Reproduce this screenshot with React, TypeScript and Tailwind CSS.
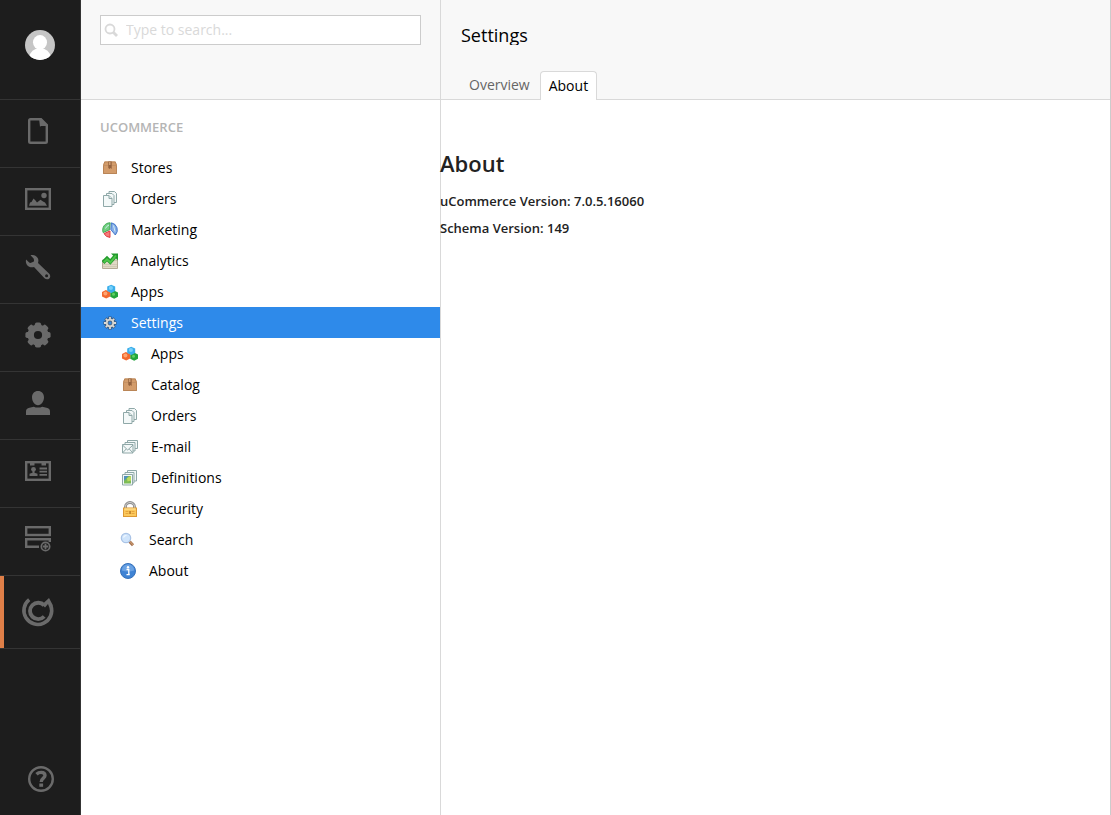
import React, { type ReactNode } from "react";

/* ---------- Section icons (dark rail) ---------- */

function RailIcon({ children }: { children: ReactNode }) {
  return (
    <svg aria-hidden="true" viewBox="0 0 28 28" className="size-7" fill="none">
      {children}
    </svg>
  );
}

const gearTeeth = [0, 45, 90, 135, 180, 225, 270, 315];

const ContentIcon = () => (
  <RailIcon>
    <path d="M16 2.200H6.500Q5.200 2.200 5.200 3.500V24.500Q5.200 25.800 6.500 25.800H21.500Q22.800 25.800 22.800 24.500V8.500" stroke="currentColor" strokeWidth="2.400" />
    <path d="M15 1h2.500L24 7.500V9h-7q-.5 0-1 1z" fill="currentColor" />
  </RailIcon>
);
const MediaIcon = () => (
  <RailIcon>
    <rect x="2.200" y="4.200" width="23.600" height="19.600" stroke="currentColor" strokeWidth="2.400" />
    <circle cx="20" cy="10.500" r="2.700" fill="currentColor" />
    <path d="M5 20.700 6 17.500 7.500 17 9.500 13.500 11.500 15.500 13 17.500 16.500 14.800 19 16.500 21 17.500 23 20.700z" fill="currentColor" />
  </RailIcon>
);
const WrenchIcon = () => (
  <RailIcon>
    <path
      fillRule="evenodd"
      fill="currentColor"
      d="M6.500 2.200C9.500 1.200 12.900 2.700 14 5.600 14.600 7.200 14.500 8.600 14 10L25 20.400C26.700 22 26.600 24.200 25.300 25.400 24 26.600 22 26.600 20.500 25.200L10 14C7.500 14.900 4.600 14 3 11.900 1.800 10.200 1.600 8.400 2.100 6.600L5.200 9.600Q6 10.200 7 9.800L9.500 8.700Q10.300 8 10 7L9.600 5.400zM22.600 21.200a1.500 1.500 0 1 0 0 3 1.500 1.500 0 0 0 0-3z"
    />
  </RailIcon>
);
const GearIcon = () => (
  <RailIcon>
    <circle cx="14" cy="14" r="7.300" stroke="currentColor" strokeWidth="6.400" />
    {gearTeeth.map((a) => (
      <rect key={a} x="10.900" y="1.400" width="6.200" height="5" rx="1.800" fill="currentColor" transform={`rotate(${a} 14 14)`} />
    ))}
  </RailIcon>
);
const UserIcon = () => (
  <RailIcon>
    <path
      fill="currentColor"
      d="M14 2c3.600 0 6 2.600 6 6.200 0 4-2.600 8-6 8s-6-4-6-8C8 4.600 10.400 2 14 2zM2 26v-3.500c0-2.200 1.200-3.200 3.500-3.800l4.300-1Q11.500 18.600 14 18.600t4.200-.9l4.300 1c2.300.6 3.500 1.600 3.500 3.800V26z"
    />
  </RailIcon>
);
const MembersIcon = () => (
  <RailIcon>
    <rect x="2.200" y="5.200" width="23.600" height="17.600" stroke="currentColor" strokeWidth="2.400" />
    <path d="M6 5h4.500v3.500H6zM17.500 5H22v3.500h-4.500z" fill="currentColor" />
    <path d="M15.500 11.500H23M15.500 14.700H23M15.500 17.900H23" stroke="currentColor" strokeWidth="1.800" />
    <circle cx="9.500" cy="12.300" r="2.400" fill="currentColor" />
    <path d="M8.500 13.500h2v2.300l3 1V19H5.500v-2.200l3-1z" fill="currentColor" />
  </RailIcon>
);
const FormsIcon = () => (
  <RailIcon>
    <rect x="2.200" y="2.200" width="23.600" height="7.800" stroke="currentColor" strokeWidth="2.400" />
    <path d="M15 21.800H2.200V14.200H25.800V17" stroke="currentColor" strokeWidth="2.400" />
    <circle cx="21.500" cy="21.500" r="4.200" stroke="currentColor" strokeWidth="1.700" />
    <path d="M21.500 18.800v5.400M18.800 21.500h5.400" stroke="currentColor" strokeWidth="1.800" />
  </RailIcon>
);
const CommerceIcon = () => (
  <svg aria-hidden="true" viewBox="0 0 34 34" className="size-[34px]" fill="none">
    <path d="M8.200 4.600A13.900 13.900 0 1 0 30 11.100" stroke="currentColor" strokeWidth="3.600" />
    <path d="M28 3 32 10.500 28.300 12.500 27 9 24 12.500 21 9.500z" fill="currentColor" />
    <path d="M23.200 10.300A8.200 8.200 0 1 0 23.200 21.500" stroke="currentColor" strokeWidth="3.900" />
  </svg>
);
const HelpIcon = () => (
  <RailIcon>
    <circle cx="14" cy="14" r="11.800" stroke="currentColor" strokeWidth="2.400" />
    <path d="M9.500 9.300Q11.500 7.400 14.200 7.400C16.900 7.400 18 8.900 18 10.600 18 13.200 14.200 13.200 14.200 17" stroke="currentColor" strokeWidth="3.400" />
    <rect x="12.300" y="18.500" width="3.800" height="3.300" fill="currentColor" />
  </RailIcon>
);

/* ---------- Tree icons ---------- */

function TreeIcon({ children }: { children: ReactNode }) {
  return (
    <svg aria-hidden="true" viewBox="0 0 16 16" className="size-4 shrink-0" fill="none">
      {children}
    </svg>
  );
}

const BoxIcon = () => (
  <TreeIcon>
    <path d="M2.500 1.500h11L15 5.500V14H1V5.500z" fill="#d39c6b" />
    <path d="M1.500 5.500v8h13v-8L13.300 2H2.700z" stroke="#b98557" />
    <path d="M1.500 5.500h13" stroke="#c08e62" strokeWidth=".8" />
    <path d="M6.300 1.500h3.400V9l-1.200-1-1 1-1.200-1z" fill="#94633f" />
    <path d="M7 2h1.500v3H7z" fill="#cf9f74" />
  </TreeIcon>
);
const OrdersIcon = () => (
  <TreeIcon>
    <g fill="#f3f8f8" stroke="#8fa8a8">
      <path d="M7 .5h5.500l2 2v9H7z" />
      <path d="M4.500 2.500h5.500l2 2v9H4.500z" />
      <path d="M1.500 4.500h5.500l3 3v8H1.500z" />
      <path d="M7 4.500v3h3" fill="#dde8e6" />
    </g>
  </TreeIcon>
);
const MarketingIcon = () => (
  <TreeIcon>
    <path d="M7.600 7.700 1.200 10.600A7.200 7.200 0 0 1 8.200.8z" fill="#72cf80" stroke="#38a44e" strokeWidth=".9" />
    <path d="M8.800 7.500 9.500.8A7.300 7.300 0 0 1 13.300 13z" fill="#85ade9" stroke="#3a70c4" strokeWidth=".9" />
    <path d="M8 8.900v6.500A7 7 0 0 1 2 11.600z" fill="#f57d7a" stroke="#dc2f35" strokeWidth=".9" />
    <path d="M3.500 6.500Q4.500 4 7 3M11.500 3.500l1.500 6" stroke="#d0edf0" />
  </TreeIcon>
);
const AnalyticsIcon = () => (
  <TreeIcon>
    <path d="M.5 7h15v8.500H.5z" fill="#e0d9c5" stroke="#b3aa94" />
    <path d="M1 11.500h14M1 13.500h14" stroke="#cdc5b0" strokeWidth=".8" />
    <path d="m1 9.500 4-4 3.300 3.300L13 3.500" stroke="#239b2d" strokeWidth="4" />
    <path d="M9 .5h7v7z" fill="#239b2d" />
    <path d="m1.800 9.300 3.200-3 3.400 3L14 2.500" stroke="#4fc64a" strokeWidth="1.900" />
  </TreeIcon>
);
const AppsIcon = () => (
  <TreeIcon>
    <path d="m12 6.500 4 2.100v4.200l-3.800 2-4-2V8.600z" fill="#22a53b" />
    <path d="M3.900 6 8.200 8v4.500L4.200 14.500 0 12.600V8z" fill="#f26a30" />
    <path d="M9.200.8 13.200 2.600v4.400L9.400 9 5.200 7.100V2.600z" fill="#3aaeea" />
    <circle cx="8.900" cy="4" r="2.100" fill="#79d0fa" />
    <circle cx="3.400" cy="9.500" r="2" fill="#ffa470" />
    <circle cx="11.500" cy="10.300" r="1.500" fill="#5fd063" />
  </TreeIcon>
);
const SettingsIcon = () => (
  <TreeIcon>
    <g stroke="#3c5879" strokeWidth="3.400">
      <path d="M8 1.500v13M1.500 8h13M3.500 3.500l9 9M12.500 3.500l-9 9" />
    </g>
    <g stroke="#dcdad5" strokeWidth="1.800">
      <path d="M8 2v12M2 8h12M3.800 3.800l8.400 8.400M12.200 3.800l-8.400 8.400" />
    </g>
    <circle cx="8" cy="8" r="3.300" fill="#4c6d91" stroke="#d8d6d1" strokeWidth="1.800" />
    <circle cx="8" cy="8" r="1.300" fill="#2e8aea" />
  </TreeIcon>
);
const MailIcon = () => (
  <TreeIcon>
    <g fill="#f3f8f8" stroke="#8fa8a8">
      <path d="M5.500 1.500h10v8h-10z" />
      <path d="M3 3.500h10v8.500H3z" />
      <path d="M.5 5.500h10.500v8.500H.5z" />
      <path d="m.5 6 5.200 5L11 6M.5 14l3.700-4M11 14l-3.700-4" />
    </g>
  </TreeIcon>
);
const DefinitionsIcon = () => (
  <TreeIcon>
    <g fill="#f3f8f8" stroke="#8fa8a8">
      <path d="M5.500.5h9v10.500h-9z" />
      <path d="M3 2.500h9V13H3z" />
      <path d="M.5 4.500h10V15H.5z" />
    </g>
    <path d="M2 6h7v7.500H2z" fill="#7cbb55" />
    <path d="M2 6h4.500L2 11z" fill="#4f90bd" />
    <path d="m5 8 4-2v4.500l-3.500 1z" fill="#bcdc60" />
  </TreeIcon>
);
const SecurityIcon = () => (
  <TreeIcon>
    <path d="M3.500 8V5.500a4.500 4 0 0 1 9 0V8" stroke="#8d8d8d" strokeWidth="2.800" />
    <path d="M3.500 7.500v-2a4.500 4 0 0 1 9 0v2" stroke="#cfcfcf" strokeWidth="1" />
    <rect x="1.500" y="7" width="13" height="8.500" fill="#fbc95c" stroke="#dc9833" />
    <path d="M2.500 8h11" stroke="#ffe9a4" />
    <path d="M3.500 10.500h3M3.500 12.500h3M9.500 10.500h3M9.500 12.500h3" stroke="#e7a43c" />
    <path d="M7.300 10h1.500v3H7.300z" fill="#b87a25" />
  </TreeIcon>
);
const SearchIcon = () => (
  <TreeIcon>
    <path d="m9.500 9.500 3.500 3.800" stroke="#a77350" strokeWidth="3" />
    <path d="m9.500 9 3.700 4" stroke="#d4a477" strokeWidth="1" />
    <circle cx="6" cy="6" r="4.700" fill="#cfe4fb" stroke="#a9c3e6" strokeWidth="1.200" />
    <path d="M3.500 5.500Q4 3.500 6.500 3.500" stroke="#f2f9ff" strokeWidth="1.200" />
  </TreeIcon>
);
const InfoIcon = () => (
  <TreeIcon>
    <circle cx="8" cy="8" r="7.500" fill="#3f83d4" stroke="#3772bb" />
    <path d="M1.800 7.500a6.200 6.200 0 0 1 12.400 0Q8 9.500 1.800 7.500z" fill="#6aa2e3" />
    <circle cx="8" cy="4.200" r="1.200" fill="#fff" />
    <path d="M6.500 6.500h2.300v5h1M6.500 11.700h3.300" stroke="#fff" strokeWidth="1.300" />
  </TreeIcon>
);

/* ---------- Data ---------- */

const sections = [
  { label: "Content", Icon: ContentIcon },
  { label: "Media", Icon: MediaIcon },
  { label: "Settings", Icon: WrenchIcon },
  { label: "Developer", Icon: GearIcon },
  { label: "Users", Icon: UserIcon },
  { label: "Members", Icon: MembersIcon },
  { label: "Forms", Icon: FormsIcon },
];

const roots = [
  { label: "Stores", Icon: BoxIcon },
  { label: "Orders", Icon: OrdersIcon },
  { label: "Marketing", Icon: MarketingIcon },
  { label: "Analytics", Icon: AnalyticsIcon },
  { label: "Apps", Icon: AppsIcon },
];

const settingsNodes = [
  { label: "Apps", Icon: AppsIcon, indent: "pl-[41px]" },
  { label: "Catalog", Icon: BoxIcon, indent: "pl-[41px]" },
  { label: "Orders", Icon: OrdersIcon, indent: "pl-[41px]" },
  { label: "E-mail", Icon: MailIcon, indent: "pl-[41px]" },
  { label: "Definitions", Icon: DefinitionsIcon, indent: "pl-[41px]" },
  { label: "Security", Icon: SecurityIcon, indent: "pl-[41px]" },
  { label: "Search", Icon: SearchIcon, indent: "pl-[39px]" },
  { label: "About", Icon: InfoIcon, indent: "pl-[39px]" },
];

function TreeNode({
  label,
  Icon,
  indent = "pl-[21px]",
  tone = "text-black",
}: {
  label: string;
  Icon: () => ReactNode;
  indent?: string;
  tone?: string;
}) {
  return (
    <a href="#" className={`flex h-[31px] items-center gap-[13px] ${indent} ${tone}`}>
      <Icon />
      <span>{label}</span>
    </a>
  );
}

/* ---------- Page ---------- */

function SectionRail() {
  return (
    <nav aria-label="Sections" className="flex w-[81px] shrink-0 flex-col border-r border-[#343434] bg-[#1d1d1d] text-[#6a6a6a]">
      <button type="button" aria-label="Your profile" className="flex h-[100px] justify-center border-b border-[#343434] pt-[30px]">
        <svg aria-hidden="true" viewBox="0 0 30 30" className="size-[30px]">
          <clipPath id="avatar">
            <circle cx="15" cy="15" r="15" />
          </clipPath>
          <g clipPath="url(#avatar)">
            <rect width="30" height="30" fill="#c5c5c5" />
            <ellipse cx="15" cy="27" rx="10.500" ry="9" fill="#fff" />
            <ellipse cx="15" cy="12.300" rx="7" ry="7.300" fill="#fff" />
          </g>
        </svg>
      </button>
      {sections.map(({ label, Icon }) => (
        <a key={label} href="#" aria-label={label} className="flex h-[68px] justify-center border-b border-[#343434] pt-[17px] pr-1">
          <Icon />
        </a>
      ))}
      <a href="#" aria-label="uCommerce" aria-current="page" className="flex h-[73px] border-b border-[#343434]">
        <span className="w-1 bg-[#df7f48]" />
        <span className="flex flex-1 items-center justify-center pr-2">
          <CommerceIcon />
        </span>
      </a>
      <button type="button" aria-label="Help" className="mt-auto flex justify-center pb-[22px] pl-px">
        <HelpIcon />
      </button>
    </nav>
  );
}

function TreePanel() {
  return (
    <aside className="flex w-[360px] shrink-0 flex-col border-r border-[#d9d9d9] bg-white">
      <form role="search" className="h-[100px] border-b border-[#d9d9d9] bg-[#f8f8f8] px-[19px] pt-[15px]">
        <label className="flex h-[30px] items-center border border-[#ccc] bg-white pl-[3px]">
          <svg aria-hidden="true" viewBox="0 0 14 14" className="size-3.5 shrink-0" fill="none" stroke="#d9d9d9">
            <circle cx="6" cy="6" r="4.500" strokeWidth="1.800" />
            <path d="m9 9 4 4" strokeWidth="2.800" />
          </svg>
          <input
            type="text"
            aria-label="Search"
            placeholder="Type to search..."
            className="min-w-0 flex-1 pl-2 text-sm outline-none placeholder:text-[#d9d9d9]"
          />
        </label>
      </form>
      <h2 className="px-[19px] pt-[17px] pb-[15px] text-[13px] leading-5 font-semibold text-[#b5b5b5]">UCOMMERCE</h2>
      <ul className="text-sm">
        {roots.map((node) => (
          <li key={node.label}>
            <TreeNode {...node} />
          </li>
        ))}
        <li>
          <div className="bg-[#2e8aea]">
            <TreeNode label="Settings" Icon={SettingsIcon} tone="text-white" />
          </div>
          <ul>
            {settingsNodes.map((node) => (
              <li key={node.label}>
                <TreeNode {...node} />
              </li>
            ))}
          </ul>
        </li>
      </ul>
    </aside>
  );
}

export default function App() {
  return (
    <div className="flex min-h-screen bg-white font-['Open_Sans',sans-serif]">
      <SectionRail />
      <TreePanel />
      <main className="min-w-0 flex-1 border-r border-[#ccc]">
        <header className="flex h-[100px] flex-col justify-between border-b border-[#d9d9d9] bg-[#f8f8f8] pt-[25px] pl-5">
          <h1 className="overflow-hidden text-lg leading-5 text-black">Settings</h1>
          <div role="tablist" className="-mb-px flex items-end gap-0.5 text-sm">
            <button type="button" role="tab" aria-selected="false" className="h-[29px] px-2 pb-0.5 text-[#666]">
              Overview
            </button>
            <button type="button" role="tab" aria-selected="true" className="h-[29px] rounded-t border border-b-0 border-[#d9d9d9] bg-white px-2 text-black">
              About
            </button>
          </div>
        </header>
        <section className="-ml-px pt-12 text-[#222]">
          <h2 className="text-[22px] leading-[30px] font-semibold">About</h2>
          <p className="mt-3.5 text-[13px] leading-[19px] font-semibold">uCommerce Version: 7.0.5.16060</p>
          <p className="mt-2 text-[13px] leading-[19px] font-semibold">Schema Version: 149</p>
        </section>
      </main>
    </div>
  );
}
